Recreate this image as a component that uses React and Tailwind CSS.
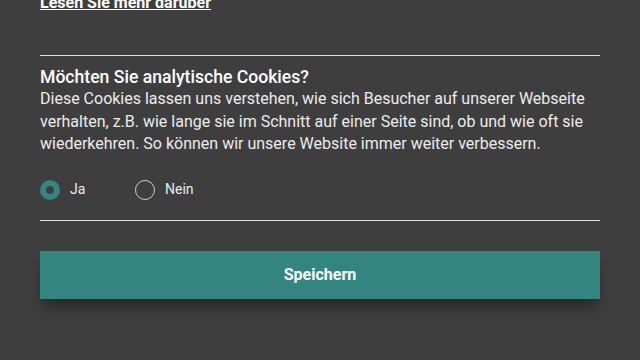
import React, { useState } from "react";

export default function App() {
  const [choice, setChoice] = useState("ja");

  return (
    <div className="w-[640px] h-[360px] overflow-hidden bg-[#3e3e3e] text-[#ececec] font-['Roboto',sans-serif]">
      <div className="px-10">
        {/* previous section tail */}
        <div className="-mt-[9px] pb-[40px] border-b border-[#e0e0e0]">
          <a href="#" className="text-[16px] leading-[24px] font-bold underline text-white">
            Lesen Sie mehr darüber
          </a>
        </div>

        {/* ANALYTICS SECTION */}
        <div className="pt-[10px] pb-[19px] border-b border-[#e0e0e0]">
          <h2 className="text-[17.6px] leading-[22px] font-medium text-white">Möchten Sie analytische Cookies?</h2>
          <p className="text-[16px] leading-[22.5px]">
            Diese Cookies lassen uns verstehen, wie sich Besucher auf unserer Webseite verhalten, z.B. wie lange sie im Schnitt auf einer Seite sind, ob und wie oft sie wiederkehren. So können wir unsere Website immer weiter verbessern.
          </p>
          <div className="flex items-center mt-[23px] h-[22px] text-[14px]">
            <button onClick={() => setChoice("ja")} className="flex items-center gap-[10px] w-[95px]">
              {choice === "ja" ? (
                <span className="w-5 h-5 rounded-full border-[6px] border-[#358580] bg-[#3e3e3e]" />
              ) : (
                <span className="w-5 h-5 rounded-full border-[1.5px] border-[#cfcfcf]" />
              )}
              <span>Ja</span>
            </button>
            <button onClick={() => setChoice("nein")} className="flex items-center gap-[10px]">
              {choice === "nein" ? (
                <span className="w-5 h-5 rounded-full border-[6px] border-[#358580] bg-[#3e3e3e]" />
              ) : (
                <span className="w-5 h-5 rounded-full border-[1.5px] border-[#cfcfcf]" />
              )}
              <span>Nein</span>
            </button>
          </div>
        </div>

        <button className="mt-[30px] w-full h-[48px] bg-[#338680] text-white text-[16px] font-bold shadow-[0_10px_16px_-4px_rgba(0,0,0,0.45)]">
          Speichern
        </button>
      </div>
    </div>
  );
}
